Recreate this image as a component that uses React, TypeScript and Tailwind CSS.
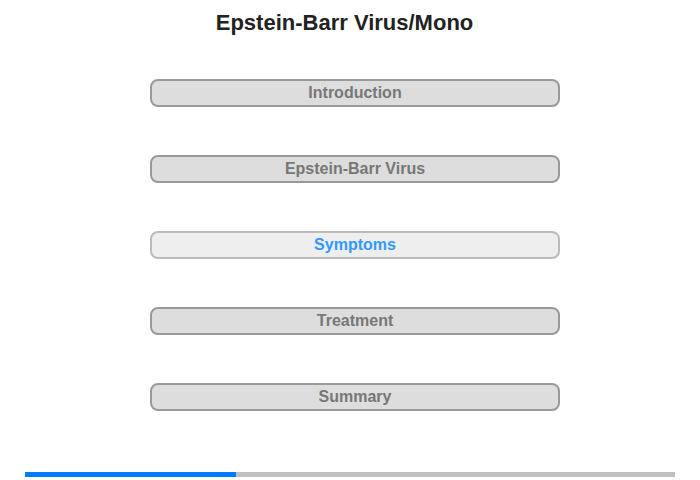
import React from "react";

const items = ["Introduction", "Epstein-Barr Virus", "Symptoms", "Treatment", "Summary"];

export default function App() {
  return (
    <div
      className="w-[700px] h-[480px] bg-white flex flex-col items-center"
      style={{ fontFamily: '"Liberation Sans", Arial, sans-serif' }}
    >
      <h1 className="mt-[9px] mr-[11px] text-[22px] leading-[28px] font-bold text-[#222222]">
        Epstein-Barr Virus/Mono
      </h1>
      <div className="mt-[42px] ml-[10px] flex flex-col gap-[48px]">
        {items.map((t) =>
          t === "Symptoms" ? (
            <div
              key={t}
              className="w-[410px] h-[28px] rounded-[8px] border-2 border-[#bbbbbb] bg-[#eeeeee] flex items-center justify-center text-[16px] font-bold text-[#3399ff]"
            >
              {t}
            </div>
          ) : (
            <div
              key={t}
              className="w-[410px] h-[28px] rounded-[8px] border-2 border-[#999999] bg-[#dddddd] flex items-center justify-center text-[16px] font-bold text-[#777777]"
            >
              {t}
            </div>
          )
        )}
      </div>
      <div className="mt-[61px] w-[650px] h-[5px] bg-[#c0c0c0] flex">
        <div className="w-[211px] h-full bg-[#007bff]" />
      </div>
    </div>
  );
}
